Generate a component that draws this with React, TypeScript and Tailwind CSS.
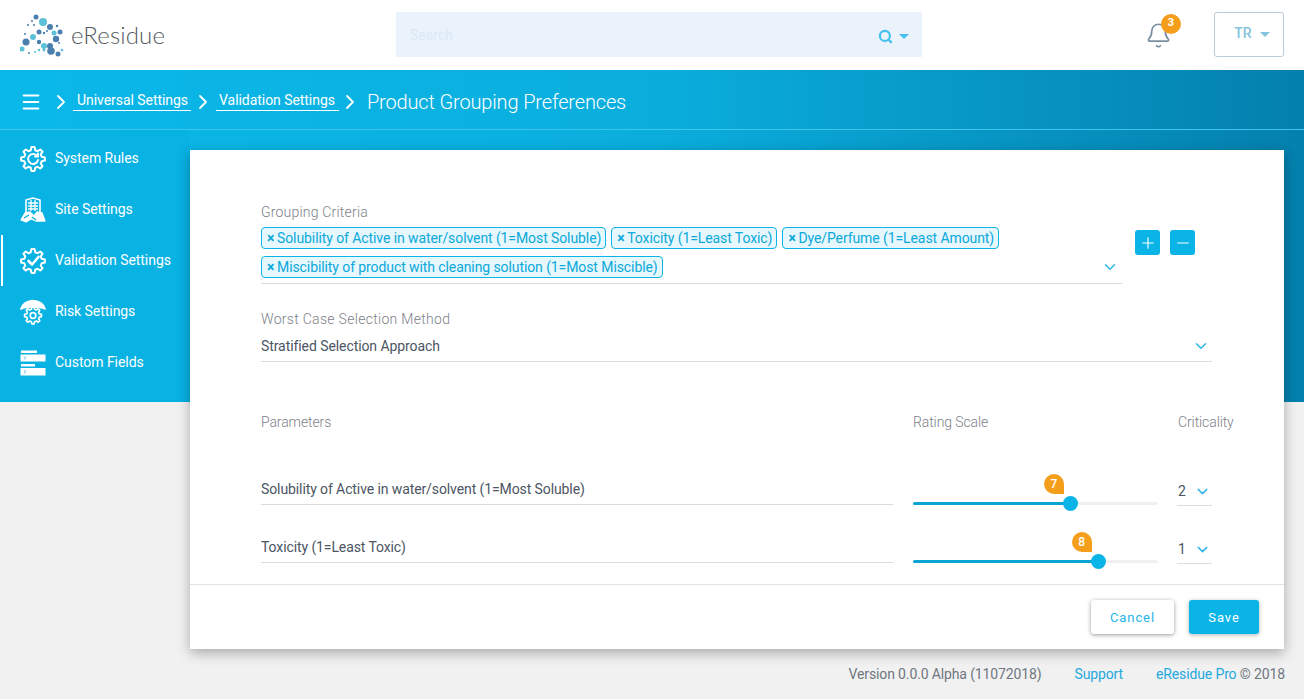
import { Plus, Minus, ChevronDown, ChevronRight, Search, Bell, Menu } from 'lucide-react';

// outline of a cog, shared by the sidebar icons
function cogPath(cx: number, cy: number, outer: number, inner: number, teeth: number) {
  const points: string[] = [];
  const step = (Math.PI * 2) / teeth;
  for (let i = 0; i < teeth; i++) {
    const a = i * step;
    const corners: [number, number][] = [
      [a - step * 0.32, inner],
      [a - step * 0.17, outer],
      [a + step * 0.17, outer],
      [a + step * 0.32, inner],
    ];
    corners.forEach(([ang, r]) => {
      points.push(`${(cx + Math.cos(ang) * r).toFixed(2)} ${(cy + Math.sin(ang) * r).toFixed(2)}`);
    });
  }
  return `M${points.join('L')}Z`;
}

function SystemRulesIcon() {
  return (
    <svg width="26" height="26" viewBox="0 0 26 26" fill="none" stroke="white" strokeWidth="2" strokeLinejoin="round">
      <path d={cogPath(13, 13, 12, 9, 8)} />
      <path d="M17.5 10.5A5 5 0 1 0 18 14" strokeLinecap="round" />
      <path d="M15 10.5h3v-3" strokeLinecap="round" />
    </svg>
  );
}

function SiteIcon() {
  return (
    <svg width="26" height="26" viewBox="0 0 26 26" fill="none" stroke="white" strokeWidth="1.3">
      <path d="M6 16V3l7-2 7 2v13" strokeWidth="1.6" />
      <path d="M8 6h10M8 9h10M8 12h10M11 3v11M15 3v11" />
      <path d="M5 16l-4 7 5 2 5-3 5 2 9 0-3-8-5-1-3 4-4-4z" fill="white" stroke="white" strokeLinejoin="round" />
      <path d="M4 21l5-3M12 20l4 3" stroke="#08b2e3" />
    </svg>
  );
}

function ValidationIcon() {
  return (
    <svg width="26" height="26" viewBox="0 0 26 26" fill="none" stroke="white" strokeWidth="2" strokeLinejoin="round">
      <path d={cogPath(13, 13, 12, 9, 8)} />
      <path d="M8.5 13l3.5 3.5 6.5-7.5" strokeWidth="2.6" strokeLinecap="round" />
    </svg>
  );
}

function RiskIcon() {
  return (
    <svg width="26" height="26" viewBox="0 0 26 26" fill="none" stroke="white" strokeWidth="1.7" strokeLinejoin="round">
      <path d="M1 10C2 5 7 1.500 13 1.500S24 5 25 10c-3-1.500-5-2-12-2S4 8.500 1 10z" fill="white" />
      <path d={cogPath(13, 16.500, 8.500, 6.500, 8)} />
      <circle cx="13" cy="16.500" r="2.800" />
    </svg>
  );
}

function CustomFieldsIcon() {
  return (
    <svg width="26" height="26" viewBox="0 0 26 26" fill="none">
      <rect x="1" y="0.500" width="16" height="2.500" fill="white" />
      <rect x="0.500" y="4.500" width="25" height="7" fill="white" />
      <rect x="1" y="14" width="14" height="2.500" fill="white" />
      <rect x="0.500" y="18" width="25" height="7.500" fill="white" />
      <path d="M5 6.500v3M5 20v3.500" stroke="#7cc4e8" strokeWidth="1.200" />
    </svg>
  );
}

function Logo() {
  const dark = '#4a7fb0';
  const light = '#5cc0d8';
  const dots: [number, number, number, string][] = [
    [16, 5, 2.500, dark], [23, 10, 4, light], [12, 9, 1, dark], [14, 13, 1, dark],
    [30, 15, 3, dark], [37, 14, 1.200, dark], [40, 20, 2.500, dark], [34, 21, 2.500, light],
    [19, 20, 2.500, dark], [13, 25, 3, light], [19, 30, 2.200, dark], [6, 30, 3.500, dark],
    [27, 19, 1, dark], [24, 21, 1.200, dark], [36, 27, 3.200, dark], [24, 34, 3, light],
    [30, 34, 3, dark], [2, 37, 2.500, light], [31, 39, 3.800, dark], [38, 42, 2.500, dark],
    [42, 38, 1.300, light], [9, 41, 1, dark], [15, 40, 1, light], [19, 38, 1.200, light],
    [24, 38, 1.500, light], [8, 13, 1, dark], [5, 22, 1, dark], [39, 31, 1, dark],
  ];
  return (
    <svg width="44" height="46" viewBox="0 0 44 46">
      {dots.map(([cx, cy, r, fill], i) => (
        <circle key={i} cx={cx} cy={cy} r={r} fill={fill} />
      ))}
    </svg>
  );
}

function Caret({ className }: { className: string }) {
  return <span className={`inline-block h-0 w-0 border-x-[5px] border-t-[5px] border-x-transparent ${className}`} />;
}

function Chip({ label }: { label: string }) {
  return (
    <span className="flex h-[22px] items-center rounded-[4px] border border-[#0ab4e6] bg-[#e6f7fe] pl-[5px] pr-[4px] text-[14px] tracking-[-0.09px] text-[#0aa9da]">
      <span className="w-[10px] text-[14px] font-bold leading-none">×</span>
      {label}
    </span>
  );
}

function FieldSelect({ label, value }: { label: string; value: string }) {
  return (
    <div>
      <div className="text-[14px] font-light leading-[16px] tracking-[0.3px] text-[#7d8188]">{label}</div>
      <div className="mt-[4px] flex h-[31px] items-center justify-between border-b border-[#dcdcdc]">
        <span className="text-[14px] tracking-[-0.08px] text-[#4b5563]">{value}</span>
        <ChevronDown className="mr-[2px] h-[18px] w-[18px] text-[#2db4e8]" />
      </div>
    </div>
  );
}

function ParamRow({ name, rating, level }: { name: string; rating: number; level: string }) {
  const percent = rating === 7 ? 64 : 75.4;
  return (
    <div className="flex h-[58px] items-start">
      <div className="flex h-[33px] w-[632px] items-center border-b border-[#dcdcdc] pt-[2px] text-[14px] tracking-[-0.1px] text-[#4b5563]">
        {name}
      </div>
      <div className="ml-[20px] w-[245px] pt-[30px]">
        <div className="relative h-[3px] rounded-full bg-[#f0f0f0]">
          <div className="h-full rounded-full bg-[#0aa5d3]" style={{ width: `${percent}%` }} />
          <div
            className="absolute top-[-6px] ml-[-7px] h-[15px] w-[15px] rounded-full bg-[#0ab4e6]"
            style={{ left: `${percent}%` }}
          />
          <div
            className="absolute top-[-28px] ml-[-26px] flex h-[20px] w-[20px] items-center justify-center rounded-[10px] rounded-br-none bg-[#f59e1c] text-[12px] font-medium text-white"
            style={{ left: `${percent}%` }}
          >
            {rating}
          </div>
        </div>
      </div>
      <div className="ml-[19px] flex h-[34px] w-[35px] items-center justify-between border-b border-[#dcdcdc] pl-[1px] pt-[5px] text-[14px] text-[#4b5563]">
        {level}
        <ChevronDown className="mr-[1px] h-[17px] w-[17px] text-[#2db4e8]" />
      </div>
    </div>
  );
}

const navItems = [
  { label: 'System Rules', Icon: SystemRulesIcon },
  { label: 'Site Settings', Icon: SiteIcon },
  { label: 'Validation Settings', Icon: ValidationIcon, active: true },
  { label: 'Risk Settings', Icon: RiskIcon },
  { label: 'Custom Fields', Icon: CustomFieldsIcon },
];

export default function App() {
  return (
    <div className="h-[699px] overflow-hidden bg-[#f1f1f1] font-['Roboto',sans-serif]">
      {/* top bar */}
      <header className="flex h-[70px] items-center bg-white">
        <div className="flex w-[396px] items-center pl-[20px]">
          <Logo />
          <span className="ml-[7px] font-['Lato',sans-serif] text-[24px] font-light tracking-[0.15px] text-[#555b60]">
            eResidue
          </span>
        </div>
        <div className="mb-[1px] flex h-[45px] w-[526px] items-center justify-between bg-[#eaf2fc] pl-[14px] pr-[13px]">
          <span className="mt-[2px] text-[14px] text-[#dce8f5]">Search</span>
          <div className="mt-[4px] flex items-center gap-[6px]">
            <Search className="h-[15px] w-[15px] text-[#45c1ee]" strokeWidth={3.5} />
            <Caret className="border-t-[#45c1ee]" />
          </div>
        </div>
        <div className="relative ml-[223px]">
          <Bell className="h-[27px] w-[27px] text-[#7a8ea3]" strokeWidth={1.500} />
          <span className="absolute left-[16px] top-[-8px] flex h-[20px] w-[20px] items-center justify-center rounded-full bg-[#f59e1c] text-[11px] font-bold text-white">
            3
          </span>
        </div>
        <button className="mb-[1px] ml-[42px] flex h-[45px] w-[70px] items-center justify-center gap-[8px] rounded-[3px] border border-[#bccbd8] pb-[2px] pl-[6px] text-[14px] font-medium text-[#86c3de]">
          TR
          <Caret className="mt-[2px] border-t-[#86c3de]" />
        </button>
      </header>

      {/* blue band, the card hangs out of it */}
      <div className="h-[332px] bg-[linear-gradient(90deg,#0ab8ea_0%,#0aaedd_50%,#0480ae_100%)]">
        <div className="flex h-[60px] items-center border-b border-[#3fc5ec] pl-[20px] pt-[4px] text-white">
          <Menu className="h-[22px] w-[22px]" strokeWidth={2.200} />
          <ChevronRight className="ml-[7px] h-[24px] w-[24px]" strokeWidth={1.800} />
          <a className="border-b border-white pb-[1px] pl-[4px] pr-[3px] text-[14px] leading-[17px] tracking-[-0.05px]">
            Universal Settings
          </a>
          <ChevronRight className="h-[24px] w-[24px]" strokeWidth={1.800} />
          <a className="ml-[1px] border-b border-white pb-[1px] pl-[3px] pr-[4px] text-[14px] leading-[17px] tracking-[-0.05px]">
            Validation Settings
          </a>
          <ChevronRight className="ml-[-1px] h-[24px] w-[24px]" strokeWidth={1.800} />
          <span className="ml-[5px] text-[20px] font-light tracking-[-0.15px]">Product Grouping Preferences</span>
        </div>

        <div className="flex">
          <nav className="h-[272px] w-[190px] bg-[#08b2e3] pt-[3px]">
            {navItems.map(({ label, Icon, active }) => (
              <div
                key={label}
                className={
                  active
                    ? 'ml-[1px] flex h-[51px] items-center gap-[9px] border-l-2 border-white pl-[17px] text-[14px] tracking-[-0.05px] text-white'
                    : 'flex h-[51px] items-center gap-[9px] pl-[20px] text-[14px] tracking-[-0.05px] text-white'
                }
              >
                <Icon />
                {label}
              </div>
            ))}
          </nav>

          <main className="mt-[20px] flex h-[499px] w-[1094px] flex-col bg-white shadow-[0_4px_12px_rgba(0,0,0,0.3)]">
            <div className="h-[435px] overflow-hidden border-b border-[#e2e2e2] pl-[71px] pr-[72px] pt-[54px]">
              <div className="text-[14px] font-light leading-[16px] tracking-[0.2px] text-[#7d8188]">Grouping Criteria</div>
              <div className="mt-[7px] flex">
                <div className="w-[861px] border-b border-[#dcdcdc] pb-[5px]">
                  <div className="flex gap-[5px]">
                    <Chip label="Solubility of Active in water/solvent (1=Most Soluble)" />
                    <Chip label="Toxicity (1=Least Toxic)" />
                    <Chip label="Dye/Perfume (1=Least Amount)" />
                  </div>
                  <div className="mt-[7px] flex items-center justify-between">
                    <Chip label="Miscibility of product with cleaning solution (1=Most Miscible)" />
                    <ChevronDown className="mr-[3px] h-[18px] w-[18px] text-[#2db4e8]" />
                  </div>
                </div>
                <div className="ml-[13px] mt-[3px] flex gap-[10px]">
                  <button className="flex h-[25px] w-[25px] items-center justify-center rounded-[3px] bg-[#0ab4e6] text-white">
                    <Plus className="h-[18px] w-[18px]" strokeWidth={1.500} />
                  </button>
                  <button className="flex h-[25px] w-[25px] items-center justify-center rounded-[3px] bg-[#0ab4e6] text-white">
                    <Minus className="h-[18px] w-[18px]" strokeWidth={1.500} />
                  </button>
                </div>
              </div>

              <div className="mt-[27px] w-[951px]">
                <FieldSelect label="Worst Case Selection Method" value="Stratified Selection Approach" />
              </div>

              <div className="mt-[52px] flex text-[14px] font-light leading-[16px] tracking-[-0.1px] text-[#7d8188]">
                <span className="w-[652px] shrink-0">Parameters</span>
                <span className="w-[265px] shrink-0">Rating Scale</span>
                <span className="shrink-0">Criticality</span>
              </div>

              <div className="mt-[42px]">
                <ParamRow name="Solubility of Active in water/solvent (1=Most Soluble)" rating={7} level="2" />
                <ParamRow name="Toxicity (1=Least Toxic)" rating={8} level="1" />
              </div>
            </div>

            <div className="flex flex-1 items-center justify-end gap-[15px] pr-[25px]">
              <button className="h-[34px] w-[83px] rounded-[3px] bg-white pt-[1px] text-[13px] tracking-[0.9px] text-[#25b5e6] shadow-[0_1px_4px_rgba(0,0,0,0.4)]">
                Cancel
              </button>
              <button className="h-[34px] w-[70px] rounded-[3px] bg-[#0ab4e6] pt-[1px] text-[13px] tracking-[0.9px] text-white shadow-[0_1px_4px_rgba(0,0,0,0.3)]">
                Save
              </button>
            </div>
          </main>
        </div>
      </div>

      <footer className="mt-[262px] flex justify-end pr-[19px] text-[14px] leading-[20px] tracking-[-0.13px] text-[#6f7780]">
        <span>Version 0.0.0 Alpha (11072018)</span>
        <a className="ml-[33px] text-[#25a9de]">Support</a>
        <span className="ml-[33px]">
          <a className="text-[#25a9de]">eResidue Pro</a> © 2018
        </span>
      </footer>
    </div>
  );
}
